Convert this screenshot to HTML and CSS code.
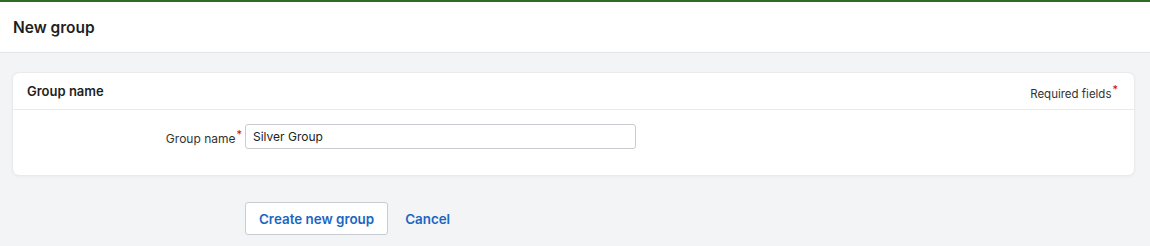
FILE: index.html
```html
<!DOCTYPE html>
<html lang="en">
<head>
    <meta charset="UTF-8">
    <title>New group</title>
    <link rel="stylesheet" href="styles.css">
</head>
<body>

<header class="page-header">
    <h1>New group</h1>
</header>

<main class="content">
    <section class="card">
        <div class="card-head">
            <h2>Group name</h2>
            <span class="required-note">Required fields<span class="star">*</span></span>
        </div>
        <div class="card-body">
            <div class="form-row">
                <label for="group-name">Group name<span class="star">*</span></label>
                <input type="text" id="group-name" value="Silver Group">
            </div>
        </div>
    </section>

    <div class="actions">
        <button class="button">Create new group</button>
        <a href="#" class="link">Cancel</a>
    </div>
</main>

</body>
</html>
```

FILE: styles.css
```css
body {
    margin: 0;
    font-family: 'Inter', 'Lato', sans-serif;
    background-color: #f3f4f6;
    color: #222;
    border-top: 2px solid #2f6b25;
}
.page-header {
    background-color: #fff;
    height: 50px;
    border-bottom: 1px solid #e3e5e8;
    display: flex;
    align-items: center;
    padding: 0 13px;
}
.page-header h1 {
    margin: 0;
    font-size: 15.5px;
    font-weight: 600;
    color: #1f1f1f;
}
.content {
    padding: 20px 16px 0 13px;
}
.card {
    background-color: #fff;
    border-radius: 6px;
    box-shadow: 0 0 0 1px #e8eaee, 0 1px 4px rgba(0, 0, 0, 0.06);
}
.card-head {
    display: flex;
    justify-content: space-between;
    align-items: center;
    height: 36px;
    padding: 0 16px 0 14px;
    border-bottom: 1px solid #e8eaee;
}
.card-head h2 {
    margin: 0;
    font-size: 13px;
    font-weight: 600;
    color: #1f1f1f;
}
.required-note {
    font-size: 11.5px;
    color: #333;
}
.star {
    color: #d0021b;
    font-size: 11px;
    vertical-align: 5px;
    margin-left: 1px;
}
.card-body {
    padding: 14px 0 26px;
}
.form-row {
    display: flex;
    align-items: center;
}
.form-row label {
    width: 229px;
    text-align: right;
    font-size: 12px;
    color: #333;
    margin-right: 3px;
}
.form-row input {
    width: 391px;
    height: 25px;
    box-sizing: border-box;
    border: 1px solid #c9ccd1;
    border-radius: 3px;
    padding: 0 7px;
    font-family: inherit;
    font-size: 12px;
    color: #222;
}
.actions {
    display: flex;
    align-items: center;
    padding: 27px 0 0 232px;
}
.button {
    height: 33px;
    padding: 0 13px;
    background-color: #fff;
    border: 1px solid #c9ccd1;
    border-radius: 3px;
    font-family: inherit;
    font-size: 13.4px;
    font-weight: 600;
    color: #1a66c2;
    cursor: pointer;
}
.link {
    margin-left: 17px;
    font-size: 13.4px;
    font-weight: 600;
    color: #1a66c2;
    text-decoration: none;
}
```
